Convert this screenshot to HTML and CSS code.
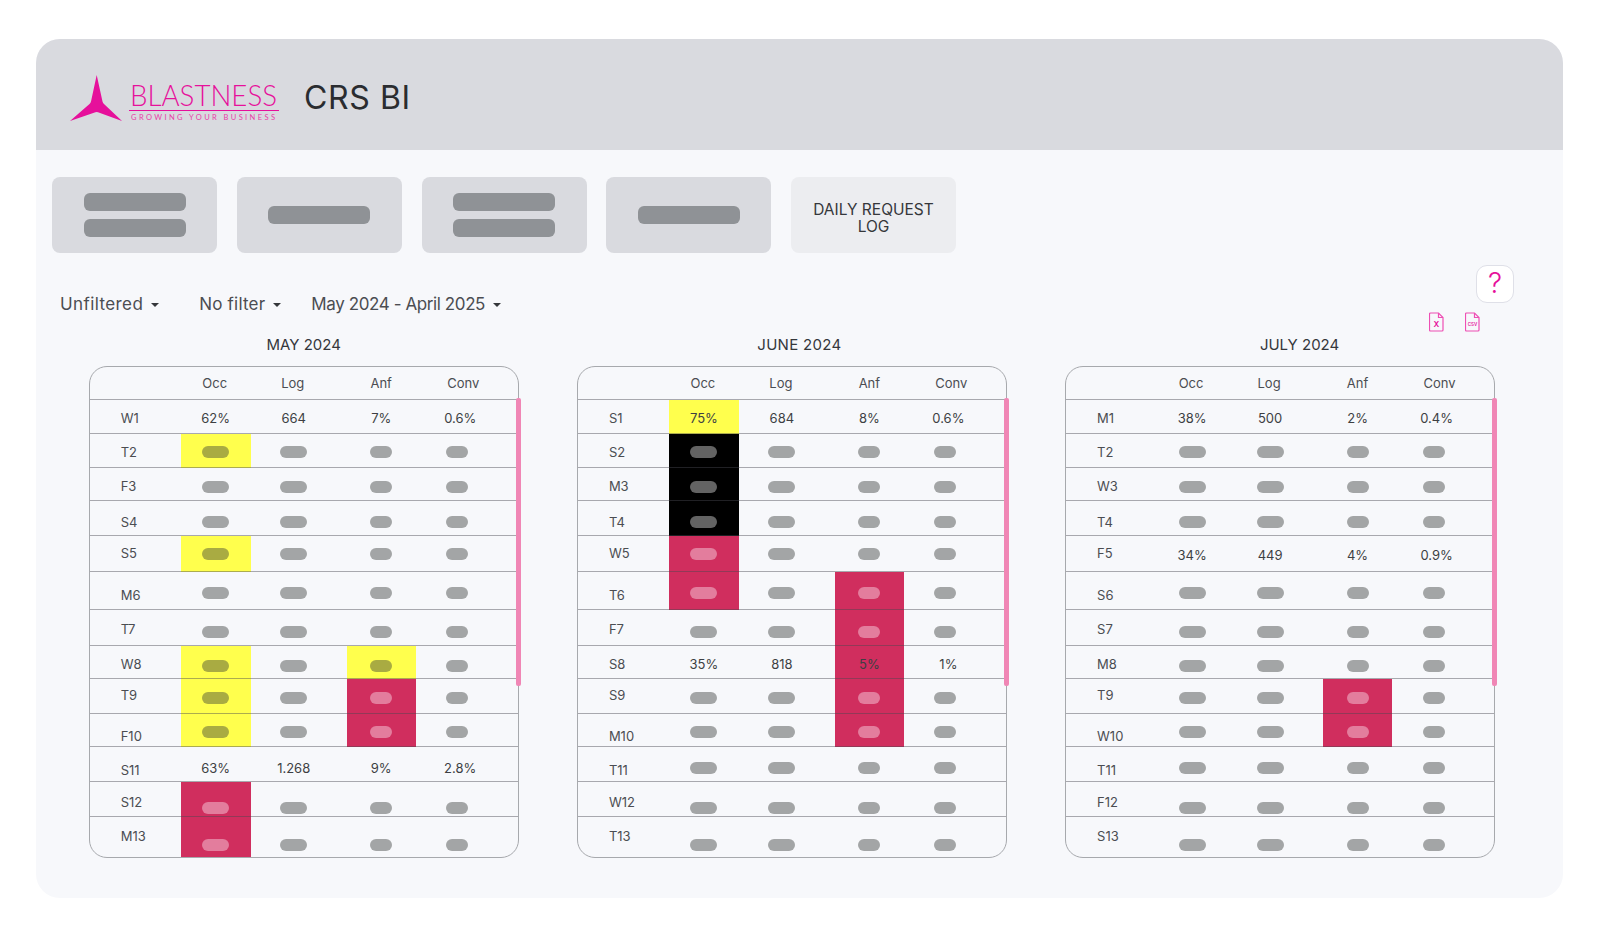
FILE: index.html
```html
<!DOCTYPE html>
<html lang="en">
<head>
<meta charset="utf-8">
<title>CRS BI</title>
<link rel="stylesheet" href="styles.css">
</head>
<body>
<div class="card">
  <header class="top">
    <div class="logo">
      <svg class="star" viewBox="0 0 52 46" width="52" height="46" aria-hidden="true"><path d="M26.700 0 L32.500 26.500 Q33 28 34 29 L52 46 L28 37.200 Q26.700 36.700 25.400 37.200 L0 46 L19.500 29 Q20.500 28 21 26.500 Z"/></svg>
      <div class="brand">
        <svg class="wordmark" width="150" height="27" viewBox="0 0 150 27"><text x="1" y="23" textLength="147" lengthAdjust="spacingAndGlyphs">BLASTNESS</text></svg>
        <div class="tagline">GROWING YOUR BUSINESS</div>
      </div>
    </div>
    <h1 class="title">CRS BI</h1>
  </header>
  <main class="main">
    <nav class="tiles">
      <div class="tile"><i class="bar"></i><i class="bar"></i></div>
      <div class="tile"><i class="bar"></i></div>
      <div class="tile"><i class="bar"></i><i class="bar"></i></div>
      <div class="tile"><i class="bar"></i></div>
      <div class="tile tile-text">DAILY REQUEST<br>LOG</div>
    </nav>
    <div class="filters">
      <div class="filter first">Unfiltered<i class="caret"></i></div>
      <div class="filter second">No filter<i class="caret"></i></div>
      <div class="filter third">May 2024 - April 2025<i class="caret"></i></div>
    </div>
    <div class="actions">
      <div class="help">?</div>
      <div class="exports">
        <svg width="15" height="20" viewBox="0 0 15 20" class="file"><path d="M1.500 1h8l4.500 4.500v12.500a1 1 0 0 1-1 1h-11.500a1 1 0 0 1-1-1v-16a1 1 0 0 1 1-1z"/><path d="M9.500 1v4.500h4.500"/><text x="7.500" y="15" class="file-x">X</text></svg>
        <svg width="15" height="20" viewBox="0 0 15 20" class="file"><path d="M1.500 1h8l4.500 4.500v12.500a1 1 0 0 1-1 1h-11.500a1 1 0 0 1-1-1v-16a1 1 0 0 1 1-1z"/><path d="M9.500 1v4.500h4.500"/><text x="7.500" y="14" class="file-csv">CSV</text></svg>
      </div>
    </div>
    <section class="months">
      <div class="month">
        <h2 class="month-title">MAY 2024</h2>
        <div class="table">
          <div class="row head"><span class="day"></span><span class="cell">Occ</span><span class="cell">Log</span><span class="cell">Anf</span><span class="cell">Conv</span></div>
          <div class="row r1"><span class="day">W1</span><span class="cell"><b class="value">62%</b></span><span class="cell"><b class="value">664</b></span><span class="cell"><b class="value">7%</b></span><span class="cell"><b class="value">0.6%</b></span></div>
          <div class="row r2"><span class="day">T2</span><span class="cell y"><i class="pill"></i></span><span class="cell"><i class="pill"></i></span><span class="cell"><i class="pill"></i></span><span class="cell"><i class="pill"></i></span></div>
          <div class="row r3"><span class="day">F3</span><span class="cell"><i class="pill"></i></span><span class="cell"><i class="pill"></i></span><span class="cell"><i class="pill"></i></span><span class="cell"><i class="pill"></i></span></div>
          <div class="row r4"><span class="day">S4</span><span class="cell"><i class="pill"></i></span><span class="cell"><i class="pill"></i></span><span class="cell"><i class="pill"></i></span><span class="cell"><i class="pill"></i></span></div>
          <div class="row r5"><span class="day">S5</span><span class="cell y"><i class="pill"></i></span><span class="cell"><i class="pill"></i></span><span class="cell"><i class="pill"></i></span><span class="cell"><i class="pill"></i></span></div>
          <div class="row r6"><span class="day">M6</span><span class="cell"><i class="pill"></i></span><span class="cell"><i class="pill"></i></span><span class="cell"><i class="pill"></i></span><span class="cell"><i class="pill"></i></span></div>
          <div class="row r7"><span class="day">T7</span><span class="cell"><i class="pill"></i></span><span class="cell"><i class="pill"></i></span><span class="cell"><i class="pill"></i></span><span class="cell"><i class="pill"></i></span></div>
          <div class="row r8"><span class="day">W8</span><span class="cell y"><i class="pill"></i></span><span class="cell"><i class="pill"></i></span><span class="cell y"><i class="pill"></i></span><span class="cell"><i class="pill"></i></span></div>
          <div class="row r9"><span class="day">T9</span><span class="cell y"><i class="pill"></i></span><span class="cell"><i class="pill"></i></span><span class="cell r"><i class="pill"></i></span><span class="cell"><i class="pill"></i></span></div>
          <div class="row r10"><span class="day">F10</span><span class="cell y"><i class="pill"></i></span><span class="cell"><i class="pill"></i></span><span class="cell r"><i class="pill"></i></span><span class="cell"><i class="pill"></i></span></div>
          <div class="row r11"><span class="day">S11</span><span class="cell"><b class="value">63%</b></span><span class="cell"><b class="value">1.268</b></span><span class="cell"><b class="value">9%</b></span><span class="cell"><b class="value">2.8%</b></span></div>
          <div class="row r12"><span class="day">S12</span><span class="cell r"><i class="pill"></i></span><span class="cell"><i class="pill"></i></span><span class="cell"><i class="pill"></i></span><span class="cell"><i class="pill"></i></span></div>
          <div class="row r13"><span class="day">M13</span><span class="cell r"><i class="pill"></i></span><span class="cell"><i class="pill"></i></span><span class="cell"><i class="pill"></i></span><span class="cell"><i class="pill"></i></span></div>
          <i class="scroll"></i>
        </div>
      </div>
      <div class="month">
        <h2 class="month-title june">JUNE 2024</h2>
        <div class="table">
          <div class="row head"><span class="day"></span><span class="cell">Occ</span><span class="cell">Log</span><span class="cell">Anf</span><span class="cell">Conv</span></div>
          <div class="row r1"><span class="day">S1</span><span class="cell y"><b class="value">75%</b></span><span class="cell"><b class="value">684</b></span><span class="cell"><b class="value">8%</b></span><span class="cell"><b class="value">0.6%</b></span></div>
          <div class="row r2"><span class="day">S2</span><span class="cell k"><i class="pill"></i></span><span class="cell"><i class="pill"></i></span><span class="cell"><i class="pill"></i></span><span class="cell"><i class="pill"></i></span></div>
          <div class="row r3"><span class="day">M3</span><span class="cell k"><i class="pill"></i></span><span class="cell"><i class="pill"></i></span><span class="cell"><i class="pill"></i></span><span class="cell"><i class="pill"></i></span></div>
          <div class="row r4"><span class="day">T4</span><span class="cell k"><i class="pill"></i></span><span class="cell"><i class="pill"></i></span><span class="cell"><i class="pill"></i></span><span class="cell"><i class="pill"></i></span></div>
          <div class="row r5"><span class="day">W5</span><span class="cell r"><i class="pill"></i></span><span class="cell"><i class="pill"></i></span><span class="cell"><i class="pill"></i></span><span class="cell"><i class="pill"></i></span></div>
          <div class="row r6"><span class="day">T6</span><span class="cell r"><i class="pill"></i></span><span class="cell"><i class="pill"></i></span><span class="cell r"><i class="pill"></i></span><span class="cell"><i class="pill"></i></span></div>
          <div class="row r7"><span class="day">F7</span><span class="cell"><i class="pill"></i></span><span class="cell"><i class="pill"></i></span><span class="cell r"><i class="pill"></i></span><span class="cell"><i class="pill"></i></span></div>
          <div class="row r8"><span class="day">S8</span><span class="cell"><b class="value">35%</b></span><span class="cell"><b class="value">818</b></span><span class="cell r"><b class="value">5%</b></span><span class="cell"><b class="value">1%</b></span></div>
          <div class="row r9"><span class="day">S9</span><span class="cell"><i class="pill"></i></span><span class="cell"><i class="pill"></i></span><span class="cell r"><i class="pill"></i></span><span class="cell"><i class="pill"></i></span></div>
          <div class="row r10"><span class="day">M10</span><span class="cell"><i class="pill"></i></span><span class="cell"><i class="pill"></i></span><span class="cell r"><i class="pill"></i></span><span class="cell"><i class="pill"></i></span></div>
          <div class="row r11"><span class="day">T11</span><span class="cell"><i class="pill"></i></span><span class="cell"><i class="pill"></i></span><span class="cell"><i class="pill"></i></span><span class="cell"><i class="pill"></i></span></div>
          <div class="row r12"><span class="day">W12</span><span class="cell"><i class="pill"></i></span><span class="cell"><i class="pill"></i></span><span class="cell"><i class="pill"></i></span><span class="cell"><i class="pill"></i></span></div>
          <div class="row r13"><span class="day">T13</span><span class="cell"><i class="pill"></i></span><span class="cell"><i class="pill"></i></span><span class="cell"><i class="pill"></i></span><span class="cell"><i class="pill"></i></span></div>
          <i class="scroll"></i>
        </div>
      </div>
      <div class="month">
        <h2 class="month-title july">JULY 2024</h2>
        <div class="table">
          <div class="row head"><span class="day"></span><span class="cell">Occ</span><span class="cell">Log</span><span class="cell">Anf</span><span class="cell">Conv</span></div>
          <div class="row r1"><span class="day">M1</span><span class="cell"><b class="value">38%</b></span><span class="cell"><b class="value">500</b></span><span class="cell"><b class="value">2%</b></span><span class="cell"><b class="value">0.4%</b></span></div>
          <div class="row r2"><span class="day">T2</span><span class="cell"><i class="pill"></i></span><span class="cell"><i class="pill"></i></span><span class="cell"><i class="pill"></i></span><span class="cell"><i class="pill"></i></span></div>
          <div class="row r3"><span class="day">W3</span><span class="cell"><i class="pill"></i></span><span class="cell"><i class="pill"></i></span><span class="cell"><i class="pill"></i></span><span class="cell"><i class="pill"></i></span></div>
          <div class="row r4"><span class="day">T4</span><span class="cell"><i class="pill"></i></span><span class="cell"><i class="pill"></i></span><span class="cell"><i class="pill"></i></span><span class="cell"><i class="pill"></i></span></div>
          <div class="row r5"><span class="day">F5</span><span class="cell"><b class="value">34%</b></span><span class="cell"><b class="value">449</b></span><span class="cell"><b class="value">4%</b></span><span class="cell"><b class="value">0.9%</b></span></div>
          <div class="row r6"><span class="day">S6</span><span class="cell"><i class="pill"></i></span><span class="cell"><i class="pill"></i></span><span class="cell"><i class="pill"></i></span><span class="cell"><i class="pill"></i></span></div>
          <div class="row r7"><span class="day">S7</span><span class="cell"><i class="pill"></i></span><span class="cell"><i class="pill"></i></span><span class="cell"><i class="pill"></i></span><span class="cell"><i class="pill"></i></span></div>
          <div class="row r8"><span class="day">M8</span><span class="cell"><i class="pill"></i></span><span class="cell"><i class="pill"></i></span><span class="cell"><i class="pill"></i></span><span class="cell"><i class="pill"></i></span></div>
          <div class="row r9"><span class="day">T9</span><span class="cell"><i class="pill"></i></span><span class="cell"><i class="pill"></i></span><span class="cell r"><i class="pill"></i></span><span class="cell"><i class="pill"></i></span></div>
          <div class="row r10"><span class="day">W10</span><span class="cell"><i class="pill"></i></span><span class="cell"><i class="pill"></i></span><span class="cell r"><i class="pill"></i></span><span class="cell"><i class="pill"></i></span></div>
          <div class="row r11"><span class="day">T11</span><span class="cell"><i class="pill"></i></span><span class="cell"><i class="pill"></i></span><span class="cell"><i class="pill"></i></span><span class="cell"><i class="pill"></i></span></div>
          <div class="row r12"><span class="day">F12</span><span class="cell"><i class="pill"></i></span><span class="cell"><i class="pill"></i></span><span class="cell"><i class="pill"></i></span><span class="cell"><i class="pill"></i></span></div>
          <div class="row r13"><span class="day">S13</span><span class="cell"><i class="pill"></i></span><span class="cell"><i class="pill"></i></span><span class="cell"><i class="pill"></i></span><span class="cell"><i class="pill"></i></span></div>
          <i class="scroll"></i>
        </div>
      </div>
    </section>
  </main>
</div>
</body>
</html>
```
FILE: styles.css
```css
* { box-sizing: border-box; }
html, body { margin: 0; height: 100%; }
body {
  background: #fff;
  padding: 39px 37px 39px 35.500px;
  font-family: Inter, "Liberation Sans", sans-serif;
  color: #35373b;
}
.card {
  height: 859px;
  background: #f7f8fb;
  border-radius: 24px;
  overflow: hidden;
}
.top {
  height: 111px;
  background: #d9dadf;
  display: flex;
  align-items: flex-start;
  padding: 36px 0 0 34.500px;
}
.logo { display: flex; align-items: flex-start; }
.star { fill: #e6109b; display: block; }
.brand { margin: 8px 0 0 7px; width: 150px; }
.wordmark { display: block; overflow: visible; }
.wordmark text {
  font-family: Lato, sans-serif;
  font-weight: 300;
  font-size: 30px;
  fill: #e6109b;
}
.tagline {
  border-top: 1.5px solid #e6109b;
  padding: 3px 0 0 2px;
  font-family: Lato, sans-serif;
  font-size: 7.500px;
  line-height: 8px;
  letter-spacing: 2.400px;
  white-space: nowrap;
  color: #e840a8;
}
.title {
  margin: 3px 0 0 25px;
  font-size: 32px;
  line-height: 40px;
  font-weight: 400;
  color: #2a2c30;
  letter-spacing: .6px;
}
.main { position: relative; padding: 27px 0 0 16.500px; }
.tiles { display: flex; gap: 19.750px; }
.tile {
  width: 165px;
  height: 76px;
  border-radius: 8px;
  background: #d9dadf;
  display: flex;
  flex-direction: column;
  align-items: center;
  justify-content: center;
  gap: 8px;
}
.bar { width: 102px; height: 18px; border-radius: 6px; background: #8f9296; }
.tile-text {
  background: #ecedf0;
  font-size: 15.500px;
  line-height: 17px;
  text-align: center;
  color: #35373b;
  display: block;
  padding-top: 24px;
}
.filters {
  display: flex;
  gap: 30px;
  height: 24px;
  margin-top: 39px;
  padding-left: 8px;
}
.filter {
  display: flex;
  align-items: center;
  font-size: 17px;
  line-height: 24px;
  color: #4b4d52;
  white-space: nowrap;
}
.first { margin-right: 10px; letter-spacing: .4px; }
.second { letter-spacing: .2px; }
.third { letter-spacing: -.4px; }
.caret {
  margin: 2px 0 0 8px;
  border-style: solid;
  border-width: 4px 4px 0;
  border-color: #35373b transparent transparent;
}
.actions {
  position: absolute;
  top: 115px;
  right: 57px;
  width: 60px;
}
.help {
  width: 38px;
  height: 38px;
  margin-left: 30px;
  border: 1.500px solid #dfe0e8;
  border-radius: 11px;
  background: #fff;
  color: #e6109b;
  font-size: 28px;
  font-weight: 300;
  line-height: 34px;
  text-align: center;
}
.exports { display: flex; gap: 21px; margin-top: 9px; margin-left: -17px; }
.file { fill: none; stroke: #ee4fb4; stroke-width: 1.200; display: block; }
.file text {
  stroke: none;
  fill: #e6109b;
  text-anchor: middle;
  font-weight: 600;
}
.file-x { font-size: 8px; }
.file-csv { font-size: 4.500px; }
.months {
  display: flex;
  gap: 58.200px;
  padding-left: 36.700px;
  margin-top: 19px;
}
.month { width: 430px; }
.month-title {
  margin: 0 0 11px;
  height: 20px;
  font-size: 15px;
  line-height: 20px;
  font-weight: 400;
  text-align: center;
  color: #35373b;
}
.june { padding-left: 15px; letter-spacing: .3px; }
.july { padding-left: 39px; }
.table {
  position: relative;
  width: 430px;
  height: 492px;
  border: 1.500px solid #a7a9ad;
  border-radius: 18px;
}
.row {
  position: relative;
  display: grid;
  grid-template-columns: 91px 70px 96px 69px 1fr;
  height: var(--h);
  --h: 34px;
  --o: 0px;
  font-size: 13px;
}
.row::after {
  content: "";
  position: absolute;
  left: 0;
  right: 0;
  bottom: 0;
  height: 1.500px;
  background: rgba(70, 72, 80, .45);
}
.row:last-of-type::after { display: none; }
.head { --h: 33px; color: #4b4d52; }
.r1  { --h: 34px; --o: 2px; }
.r2  { --h: 34px; --o: 2px; }
.r3  { --h: 33px; --o: 5px; }
.r4  { --h: 35px; --o: 7px; }
.r5  { --h: 36px; --o: 0px; }
.r6  { --h: 38px; --o: 4px; }
.r7  { --h: 36px; --o: 8px; }
.r8  { --h: 33px; --o: 6px; }
.r9  { --h: 35px; --o: 3px; }
.r10 { --h: 33px; --o: 3px; }
.r11 { --h: 35px; --o: 6px; }
.r12 { --h: 35px; --o: 16px; }
.r13 { --h: 40px; --o: 16px; }
.day {
  display: flex;
  align-items: center;
  padding: var(--d, 0px) 0 0 31px;
  color: #4b4d52;
}
.r1 .day { --d: 2px; }
.r2 .day { --d: 2px; }
.r3 .day { --d: 3px; }
.r4 .day { --d: 6px; }
.r5 .day { --d: 0px; padding-bottom: 2px; }
.r6 .day { --d: 7px; }
.r7 .day { --d: 2px; }
.r8 .day { --d: 3px; }
.r9 .day { --d: 0px; padding-bottom: 3px; }
.r10 .day { --d: 11px; }
.r11 .day { --d: 11px; }
.r12 .day { --d: 4px; }
.r13 .day { --d: 0px; padding-bottom: 2px; }
.cell {
  display: flex;
  align-items: center;
  justify-content: center;
  padding-top: var(--o);
}
.head .cell { padding-bottom: 2px; }
.row > .cell:nth-child(3) { padding-right: 10px; }
.row > .cell:nth-child(5) { padding-right: 11px; }
.head > .cell:nth-child(2) { padding-right: 2px; }
.head > .cell:nth-child(3) { padding-right: 12px; }
.head > .cell:nth-child(5) { padding-right: 7px; }
.row > .cell:nth-child(5) .value { margin-right: 2px; }
.pill {
  width: 22px;
  height: 12px;
  border-radius: 6px;
  background: #a3a5a6;
}
.row > .cell:nth-child(2) .pill,
.row > .cell:nth-child(3) .pill { width: 27px; }
.row > .cell:nth-child(5) .pill { margin-right: 8px; }
.value { font-weight: 400; color: #3d3f43; }
.r8 .value { margin-bottom: 4px; }
.r5 .value { margin-top: 2px; }
.y { background: #ffff4d; }
.y .pill { background: #a9ab42; }
.r { background: #d02e5e; }
.r .pill { background: #e37d9d; }
.k { background: #000; }
.k .pill { background: #636363; }
.scroll {
  position: absolute;
  top: 31px;
  right: -3px;
  width: 5px;
  height: 288px;
  border-radius: 2px;
  background: #f086b5;
}
```
